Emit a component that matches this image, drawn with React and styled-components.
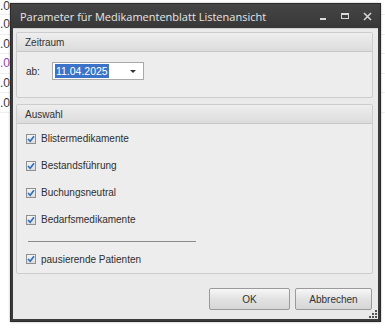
import React from "react";
import styled, { createGlobalStyle } from "styled-components";

const Global = createGlobalStyle`
  html, body { margin: 0; padding: 0; background: #ffffff; }
  body { font-family: "Liberation Sans", Arial, sans-serif; }
`;

const Desktop = styled.div`
  position: relative;
  width: 385px;
  height: 328px;
  overflow: hidden;
  background: #ffffff;
`;

const BgTable = styled.div`
  display: flex;
  flex-direction: column;
`;

const BgRow = styled.div`
  height: 19.6px;
  box-sizing: border-box;
  border-bottom: 1px solid #eeeeee;
  display: flex;
  align-items: ${(p) => (p.$first ? "flex-start" : "center")};
  font-size: 12px;
  line-height: 12px;
  height: ${(p) => (p.$first ? 15 : 19.6)}px;
  color: ${(p) => (p.$purple ? "#8a3fb0" : "#3a3a3a")};
  padding-left: 0;
`;

const Window = styled.div`
  position: absolute;
  left: 10px;
  top: 3px;
  width: 371px;
  height: 319px;
  box-sizing: border-box;
  background: #3b3b3b;
  border: 1px solid #2a2a2a;
  display: flex;
  flex-direction: column;
  box-shadow: 0 0 2px rgba(0,0,0,0.3);
`;

const TitleBar = styled.div`
  height: 24px;
  display: flex;
  align-items: center;
  padding: 0 6px 0 9px;
  background: linear-gradient(#454545, #383838);
  color: #e6e6e6;
  font-family: "Open Sans", "Liberation Sans", sans-serif;
  font-size: 11px;
`;

const Title = styled.div`
  flex: 1;
`;

const Controls = styled.div`
  display: flex;
  align-items: center;
  gap: 12px;
  padding-right: 2px;
`;

const Ctl = styled.span`
  width: 10px;
  height: 12px;
  display: flex;
  align-items: center;
  justify-content: center;
`;

const Body = styled.div`
  flex: 1;
  margin: 0 2px 2px 2px;
  background: #eaeaea;
  border-top: 1px solid #d0d0d0;
  padding: 3px 5px 0 3px;
  display: flex;
  flex-direction: column;
  position: relative;
  font-size: 10px;
  color: #2e2e2e;
`;

const Group = styled.div`
  border: 1px solid #cdcdcd;
  border-radius: 2px;
  background: #ededed;
  margin-bottom: 6px;
  height: ${(p) => p.$h}px;
  box-sizing: border-box;
  display: flex;
  flex-direction: column;
`;

const GroupHeader = styled.div`
  height: 18px;
  flex: none;
  display: flex;
  align-items: center;
  padding-left: 8px;
  background: linear-gradient(#eeeeee, #dcdcdc);
  border-bottom: 1px solid #c8c8c8;
  color: #333;
`;

const DateRow = styled.div`
  display: flex;
  align-items: center;
  padding: 10px 0 0 9px;
  gap: 12px;
`;

const Combo = styled.div`
  width: 92px;
  height: 18px;
  box-sizing: border-box;
  border: 1px solid #a9a9a9;
  background: #fff;
  display: flex;
  align-items: center;
  padding: 0 2px;
`;

const Sel = styled.span`
  background: #3b73c9;
  color: #fff;
  padding: 0 1px;
  font-size: 10.5px;
  line-height: 14px;
`;

const Arrow = styled.span`
  margin-left: auto;
  margin-right: 5px;
  width: 0;
  height: 0;
  border-left: 3px solid transparent;
  border-right: 3px solid transparent;
  border-top: 3px solid #333;
`;

const CheckList = styled.div`
  display: flex;
  flex-direction: column;
  padding: 1px 0 0 9px;
`;

const CheckRow = styled.label`
  display: flex;
  align-items: center;
  gap: 5px;
  height: ${(p) => p.$h || 27}px;
`;

const Box = styled.span`
  width: 10px;
  height: 10px;
  box-sizing: border-box;
  border: 1px solid #8f8f8f;
  background: linear-gradient(#f4f4f4, #dcdcdc);
  display: flex;
  align-items: center;
  justify-content: center;
`;

const Separator = styled.div`
  width: 168px;
  height: 1px;
  background: #8a8a8a;
  margin: 8px 0 9px 2px;
`;

const Buttons = styled.div`
  display: flex;
  justify-content: flex-end;
  gap: 5px;
  padding-top: 8px;
  padding-right: 1px;
`;

const Button = styled.button`
  width: ${(p) => p.$w}px;
  height: 22px;
  border: 1px solid #9a9a9a;
  border-radius: 2px;
  background: linear-gradient(#f7f7f7, #e2e2e2 50%, #d6d6d6);
  font-family: inherit;
  font-size: 10px;
  color: #333;
  padding: 0;
`;

const Grip = styled.svg`
  position: absolute;
  right: 1px;
  bottom: 1px;
`;

const Check = () => (
  <Box>
    <svg width="8" height="8" viewBox="0 0 8 8">
      <path d="M1 4 L3.2 6.3 L7 1.2" stroke="#2f6fc4" strokeWidth="1.7" fill="none" />
    </svg>
  </Box>
);

const items = ["Blistermedikamente", "Bestandsführung", "Buchungsneutral", "Bedarfsmedikamente"];

export default function App() {
  return (
    <Desktop>
      <Global />
      <BgTable>
        {[0, 1, 2, 3, 4, 5].map((i) => (
          <BgRow key={i} $first={i === 0} $purple={i === 3}>.0</BgRow>
        ))}
      </BgTable>
      <Window>
        <TitleBar>
          <Title>Parameter für Medikamentenblatt Listenansicht</Title>
          <Controls>
            <Ctl>
              <svg width="8" height="10"><rect x="1" y="7" width="6" height="2" fill="#d8d8d8" /></svg>
            </Ctl>
            <Ctl>
              <svg width="10" height="10"><rect x="1.5" y="2.5" width="7" height="5" fill="none" stroke="#d8d8d8" /><rect x="1" y="2" width="8" height="2" fill="#d8d8d8" /></svg>
            </Ctl>
            <Ctl>
              <svg width="9" height="9"><path d="M1 1 L8 8 M8 1 L1 8" stroke="#d8d8d8" strokeWidth="1.5" /></svg>
            </Ctl>
          </Controls>
        </TitleBar>
        <Body>
          <Group $h={66}>
            <GroupHeader>Zeitraum</GroupHeader>
            <DateRow>
              <span>ab:</span>
              <Combo>
                <Sel>11.04.2025</Sel>
                <Arrow />
              </Combo>
            </DateRow>
          </Group>
          <Group $h={170}>
            <GroupHeader>Auswahl</GroupHeader>
            <CheckList>
              {items.map((t) => (
                <CheckRow key={t}>
                  <Check />
                  <span>{t}</span>
                </CheckRow>
              ))}
              <Separator />
              <CheckRow $h={16}>
                <Check />
                <span>pausierende Patienten</span>
              </CheckRow>
            </CheckList>
          </Group>
          <Buttons>
            <Button $w={81}>OK</Button>
            <Button $w={77}>Abbrechen</Button>
          </Buttons>
          <Grip width="8" height="8" viewBox="0 0 8 8">
            {[[6, 0], [3, 3], [6, 3], [0, 6], [3, 6], [6, 6]].map(([x, y]) => (
              <rect key={x + "-" + y} x={x} y={y} width="2" height="2" fill="#555" />
            ))}
          </Grip>
        </Body>
      </Window>
    </Desktop>
  );
}
